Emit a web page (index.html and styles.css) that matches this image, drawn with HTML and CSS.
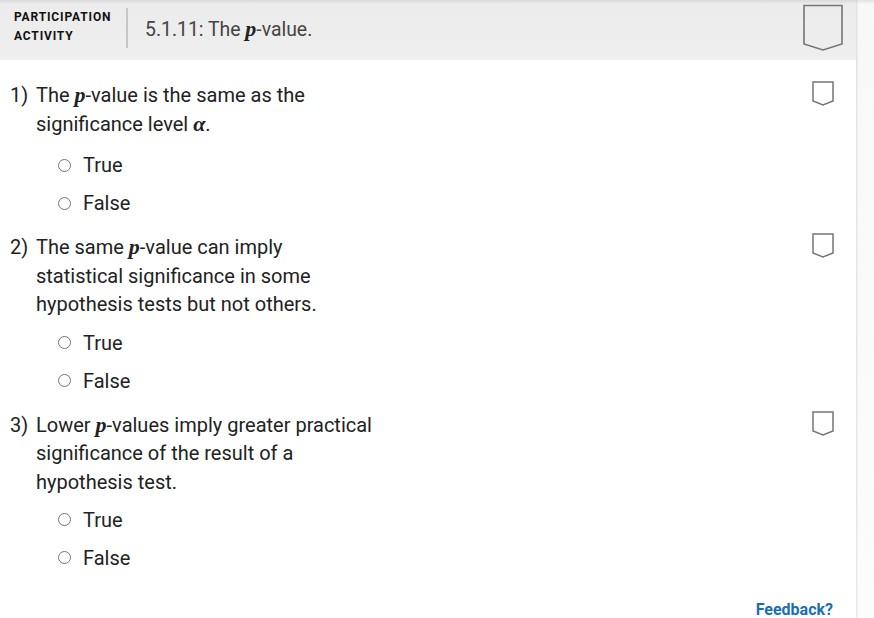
FILE: index.html
```html
<!DOCTYPE html>
<html>
<head>
<meta charset="utf-8">
<link rel="stylesheet" href="styles.css">
</head>
<body>
<div class="card">
  <div class="header">
    <div class="label">PARTICIPATION<br>ACTIVITY</div>
    <div class="divider"></div>
    <div class="title">5.1.11: The <span class="m">p</span>-value.</div>
    <svg class="big-check" width="42" height="48" viewBox="0 0 42 48">
      <path d="M2 1.5 H40 V40 L21 46 L2 40 Z" fill="none" stroke="#757575" stroke-width="1.6"/>
    </svg>
  </div>
  <div class="body">
    <div class="q">
      <div class="qrow">
        <div class="num">1)</div>
        <div class="qtext">The <span class="m">p</span>-value is the same as the significance level <span class="m a">α</span>.</div>
        <svg class="check" width="22" height="26" viewBox="0 0 22 26"><path d="M1 1 H21 V20 L11 24 L1 20 Z" fill="none" stroke="#757575" stroke-width="1.5"/></svg>
      </div>
      <div class="opts opts-first">
        <label class="opt"><span class="radio"></span>True</label>
        <label class="opt"><span class="radio"></span>False</label>
      </div>
    </div>
    <div class="q">
      <div class="qrow">
        <div class="num">2)</div>
        <div class="qtext">The same <span class="m">p</span>-value can imply statistical significance in some hypothesis tests but not others.</div>
        <svg class="check" width="22" height="26" viewBox="0 0 22 26"><path d="M1 1 H21 V20 L11 24 L1 20 Z" fill="none" stroke="#757575" stroke-width="1.5"/></svg>
      </div>
      <div class="opts">
        <label class="opt"><span class="radio"></span>True</label>
        <label class="opt"><span class="radio"></span>False</label>
      </div>
    </div>
    <div class="q">
      <div class="qrow">
        <div class="num">3)</div>
        <div class="qtext">Lower <span class="m">p</span>-values imply greater practical significance of the result of a hypothesis test.</div>
        <svg class="check" width="22" height="26" viewBox="0 0 22 26"><path d="M1 1 H21 V20 L11 24 L1 20 Z" fill="none" stroke="#757575" stroke-width="1.5"/></svg>
      </div>
      <div class="opts">
        <label class="opt"><span class="radio"></span>True</label>
        <label class="opt"><span class="radio"></span>False</label>
      </div>
    </div>
    <div class="footer"><a class="feedback">Feedback?</a></div>
  </div>
</div>
</body>
</html>
```
FILE: styles.css
```css
html, body {
  margin: 0;
  padding: 0;
}
body {
  width: 874px;
  height: 618px;
  overflow: hidden;
  background: linear-gradient(to bottom, #e2e2e2 0, #f8f8f8 4px, #fcfcfc 100%);
  font-family: Roboto, "Liberation Sans", sans-serif;
  color: #222;
}
.card {
  width: 856px;
  height: 618px;
  background: #fff;
  box-shadow: 1px 0 2px rgba(0,0,0,0.12);
}
.header {
  height: 60px;
  box-sizing: border-box;
  background: linear-gradient(to bottom, #d9d9d9 0, #ececec 4px, #eeeeee 100%);
  display: flex;
  align-items: flex-start;
  padding: 8px 0 0 14px;
}
.label {
  font-size: 12px;
  font-weight: 700;
  letter-spacing: 0.85px;
  line-height: 19px;
  color: #111;
  width: 112px;
}
.divider {
  width: 2px;
  height: 40px;
  background: #c6c6c6;
}
.title {
  margin-left: 17px;
  font-size: 19.4px;
  line-height: 40px;
  color: #444;
  padding-top: 2px;
  flex: 1;
}
.big-check {
  margin: -4px 12px 0 0;
}
.m {
  font-family: "Liberation Serif", "DejaVu Serif", serif;
  font-style: italic;
  font-weight: 700;
  font-size: 22px;
  line-height: 0;
  color: #222;
}
.body {
  padding-top: 21px;
}
.q {
  margin-bottom: 11px;
}
.qrow {
  display: flex;
  align-items: flex-start;
}
.num {
  width: 26px;
  padding-left: 10px;
  font-size: 20px;
  line-height: 28.5px;
}
.qtext {
  width: 337px;
  font-size: 20px;
  line-height: 28.5px;
  flex: none;
}
.check {
  margin-left: auto;
  margin-right: 22px;
  margin-top: 0;
}
.opts {
  margin-top: 4.75px;
  padding-left: 58px;
}
.opts-first {
  margin-top: 8.25px;
}
.opt {
  display: flex;
  align-items: center;
  height: 38px;
  font-size: 20px;
}
.radio {
  width: 11px;
  height: 11px;
  border: 1.6px solid #757575;
  border-radius: 50%;
  margin-right: 12px;
  margin-top: 0;
}
.footer {
  display: flex;
  justify-content: flex-end;
  padding-right: 23px;
  margin-top: 23px;
}
.feedback {
  font-size: 16px;
  font-weight: 700;
  color: #1a6fb3;
}
```
